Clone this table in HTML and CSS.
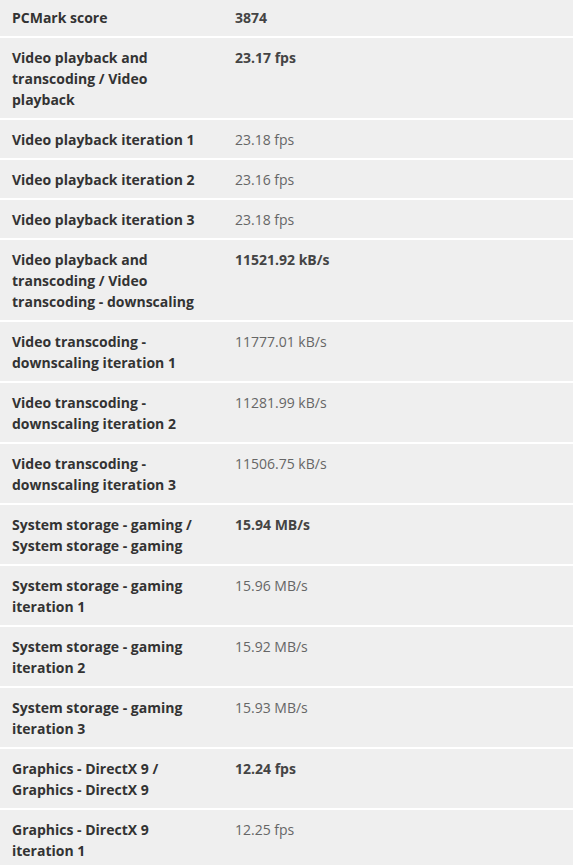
FILE: index.html
```html
<!DOCTYPE html>
<html lang="en">
<head>
    <meta charset="UTF-8">
    <meta name="viewport" content="width=device-width, initial-scale=1.0">
    <title>PCMark results</title>
    <link rel="stylesheet" href="styles.css">
</head>
<body>

    <table class="results">
        <tr class="score">
            <th>PCMark score</th>
            <td>3874</td>
        </tr>
        <tr class="score">
            <th>Video playback and transcoding / Video playback</th>
            <td>23.17 fps</td>
        </tr>
        <tr>
            <th>Video playback iteration 1</th>
            <td>23.18 fps</td>
        </tr>
        <tr>
            <th>Video playback iteration 2</th>
            <td>23.16 fps</td>
        </tr>
        <tr>
            <th>Video playback iteration 3</th>
            <td>23.18 fps</td>
        </tr>
        <tr class="score">
            <th>Video playback and transcoding / Video transcoding - downscaling</th>
            <td>11521.92 kB/s</td>
        </tr>
        <tr>
            <th>Video transcoding - downscaling iteration 1</th>
            <td>11777.01 kB/s</td>
        </tr>
        <tr>
            <th>Video transcoding - downscaling iteration 2</th>
            <td>11281.99 kB/s</td>
        </tr>
        <tr>
            <th>Video transcoding - downscaling iteration 3</th>
            <td>11506.75 kB/s</td>
        </tr>
        <tr class="score">
            <th>System storage - gaming / System storage - gaming</th>
            <td>15.94 MB/s</td>
        </tr>
        <tr>
            <th>System storage - gaming iteration 1</th>
            <td>15.96 MB/s</td>
        </tr>
        <tr>
            <th>System storage - gaming iteration 2</th>
            <td>15.92 MB/s</td>
        </tr>
        <tr>
            <th>System storage - gaming iteration 3</th>
            <td>15.93 MB/s</td>
        </tr>
        <tr class="score">
            <th>Graphics - DirectX 9 / Graphics - DirectX 9</th>
            <td>12.24 fps</td>
        </tr>
        <tr>
            <th>Graphics - DirectX 9 iteration 1</th>
            <td>12.25 fps</td>
        </tr>
    </table>

</body>
</html>
```

FILE: styles.css
```css
:root {
    --row-bg: #efefef;
    --divider: #ffffff;
    --label: #333333;
    --value: #666666;
}

* {
    box-sizing: border-box;
    margin: 0;
    padding: 0;
}

body {
    font-family: 'Open Sans', 'Noto Sans', sans-serif;
    font-size: 14px;
    line-height: 21px;
    background: var(--divider);
    color: var(--label);
}

.results {
    width: 100%;
    border-collapse: collapse;
    background: var(--row-bg);
}

.results tr {
    border-top: 2px solid var(--divider);
}

.results tr:first-child {
    border-top: none;
}

.results th,
.results td {
    padding: 9px 12px 8px;
    vertical-align: top;
    text-align: left;
}

/* top row is cut a little shorter */
.results tr:first-child th,
.results tr:first-child td {
    padding-top: 7px;
}

.results th {
    width: 223px;
    font-weight: 700;
    color: var(--label);
}

.results td {
    font-weight: 400;
    color: var(--value);
}

.results .score td {
    font-weight: 700;
    color: #444444;
}
```
